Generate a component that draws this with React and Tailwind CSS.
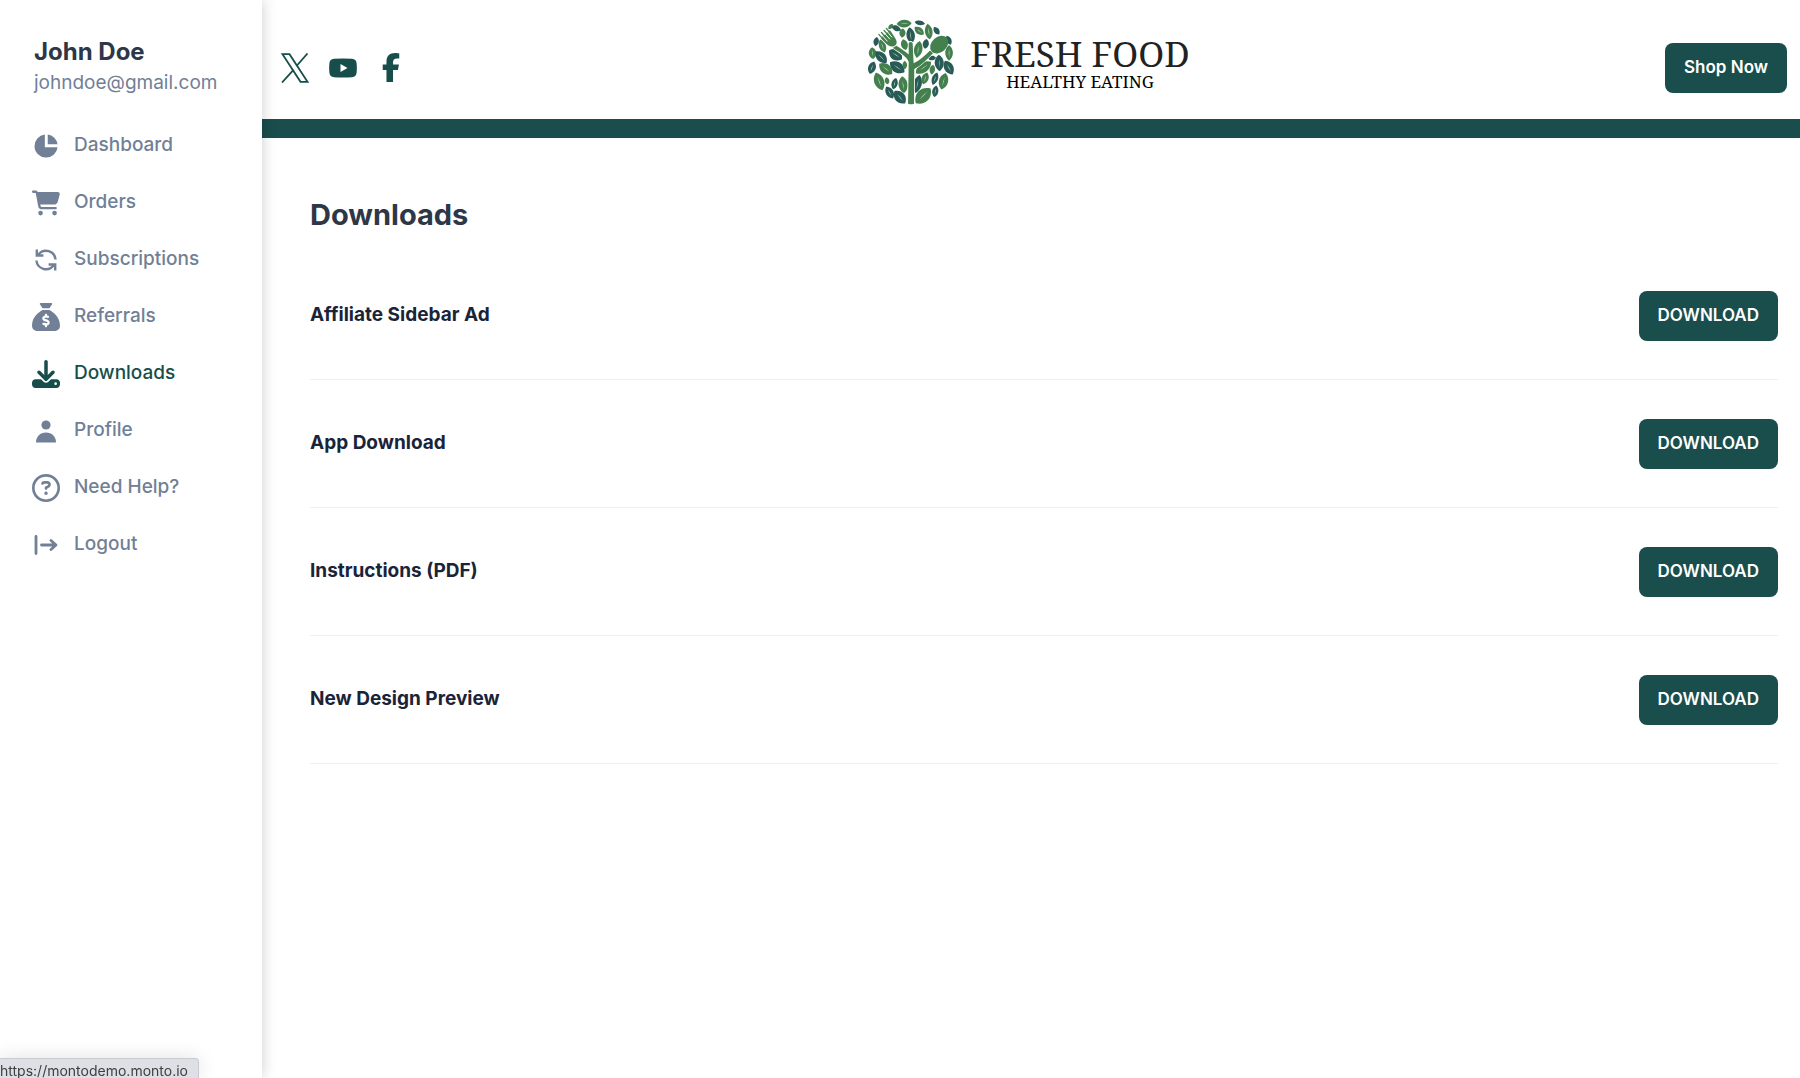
import { FaCartShopping, FaSackDollar, FaDownload, FaRegCircleQuestion, FaFacebookF } from 'react-icons/fa6';

function PieIcon() {
  return (
    <svg viewBox="0 0 24 24" className="size-7" fill="currentColor">
      <path d="M11 2.2V13h10.9A9.9 9.9 0 1 1 11 2.2z" />
      <path d="M13.5 2.2a9.9 9.9 0 0 1 8.4 8.4h-8.4z" />
    </svg>
  );
}

function SyncIcon() {
  return (
    <svg viewBox="0 0 28 28" className="size-7" fill="none" stroke="currentColor" strokeWidth="2.4">
      <path d="M6.500 8.500A9.600 9.600 0 0 1 23.600 13.500" />
      <path d="M4.400 14.500A9.600 9.600 0 0 0 21.500 19.500" />
      <path d="M4.800 3.500v6h6.600M23.200 24.500v-6h-6.600" />
      <path d="M4.500 5.500l4.500 4.500h-4.500zM23.500 22.500l-4.500-4.500h4.500z" fill="currentColor" stroke="none" />
    </svg>
  );
}

function PersonIcon() {
  return (
    <svg viewBox="0 0 28 28" className="size-7" fill="currentColor">
      <circle cx="14" cy="8" r="4.6" />
      <path d="M4 25.500c0-6 4.200-10 10-10s10 4 10 10z" />
    </svg>
  );
}

function LogoutIcon() {
  return (
    <svg viewBox="0 0 28 28" className="size-7" fill="none" stroke="currentColor" strokeWidth="2.8" strokeLinecap="round" strokeLinejoin="round">
      <path d="M4 5.500v17M9.500 14h14M19 9.500l5 4.500-5 4.500" />
    </svg>
  );
}

const NAV_ITEMS = [
  { label: 'Dashboard', Icon: PieIcon },
  { label: 'Orders', Icon: FaCartShopping },
  { label: 'Subscriptions', Icon: SyncIcon },
  { label: 'Referrals', Icon: FaSackDollar },
  { label: 'Downloads', Icon: FaDownload, active: true },
  { label: 'Profile', Icon: PersonIcon },
  { label: 'Need Help?', Icon: FaRegCircleQuestion },
  { label: 'Logout', Icon: LogoutIcon },
];

const DOWNLOADS = ['Affiliate Sidebar Ad', 'App Download', 'Instructions (PDF)', 'New Design Preview'];

// x, y, half length, half width, angle, dark
const LEAVES = [
  [146, 40, 23, 10, -3, 0], [194, 38, 16, 6, 10, 1], [122, 54, 16, 7, 25, 1], [105, 49, 10, 5, -50, 0],
  [141, 69, 14, 8, 95, 0], [166, 76, 25, 11, 82, 1], [192, 62, 18, 9, 40, 0], [221, 64, 24, 10, 82, 0],
  [245, 62, 14, 7, 55, 1], [212, 102, 15, 8, 100, 1], [189, 119, 26, 11, 100, 0], [147, 104, 17, 9, 75, 0],
  [61, 95, 14, 7, 100, 1], [50, 130, 18, 10, 85, 0], [80, 108, 21, 9, 70, 0], [76, 142, 24, 12, 45, 1],
  [120, 135, 24, 14, 35, 1], [48, 174, 20, 10, 110, 1], [90, 178, 25, 13, 38, 0], [125, 173, 27, 14, 35, 1],
  [70, 216, 29, 13, 70, 0], [94, 214, 11, 6, 80, 0], [117, 223, 18, 8, 105, 1], [102, 250, 21, 10, 60, 1],
  [143, 226, 26, 12, 83, 0], [133, 264, 25, 14, 50, 1], [148, 166, 13, 6, 90, 0],
  [205, 174, 29, 13, -37, 0], [187, 224, 28, 11, 103, 1], [210, 207, 19, 9, 110, 0], [204, 260, 32, 17, -45, 0],
  [232, 180, 15, 7, 100, 0], [240, 208, 20, 8, 110, 1], [241, 246, 18, 8, 100, 1], [266, 216, 26, 12, 105, 0],
  [253, 160, 25, 12, 87, 1], [283, 129, 24, 10, 90, 0], [282, 174, 24, 12, 60, 1], [282, 91, 15, 7, 65, 1],
  [231, 145, 12, 6, -5, 1],
];

function Leaf({ leaf }) {
  const [x, y, l, w, angle, dark] = leaf;
  const k = w * 1.55;
  return (
    <g transform={`translate(${x} ${y}) rotate(${angle})`}>
      <path d={`M${-l} 0C${-l / 2} ${-k} ${l / 2} ${-k} ${l} 0C${l / 2} ${k} ${-l / 2} ${k} ${-l} 0z`}
        fill={dark ? '#285b55' : '#43804d'} />
      {l > 17 && <path d={`M${-l * 0.5} 0Q0 -2 ${l * 0.6} 0Q0 2 ${-l * 0.5} 0z`} fill="#cfe0d3" />}
    </g>
  );
}

function TreeLogo() {
  return (
    <svg viewBox="36 26 262 262" className="size-[86px]" aria-hidden="true">
      {LEAVES.map((leaf, i) => <Leaf key={i} leaf={leaf} />)}
      <g fill="#43804d" stroke="#fff" strokeWidth="5" paintOrder="stroke">
        {/* Trunk and branches */}
        <path d="M158 284l2-127c-5-17-27-29-48-43l7-9c17 11 31 19 41 29V99q6-6 12 0l3 62c17-8 33-22 50-39l9 8c-20 20-35 37-57 48l-1 106q-9 4-18 0z" />
        {/* Fork */}
        <path d="M75 83l28-23c9 14 18 25 20 34s-5 17-15 16-22-13-33-27z" />
      </g>
      {/* Spoon */}
      <ellipse cx="253" cy="104" rx="31" ry="23" transform="rotate(-42 253 104)" fill="#43804d" />
      <g stroke="#43804d" strokeWidth="4" strokeLinecap="round">
        <path d="M69 73l16 18M77 67l16 18M85 61l16 18M92 55l16 18" />
      </g>
      <g stroke="#fff" strokeWidth="3">
        <path d="M73 69l22 25M81 63l22 25M89 57l20 25" />
      </g>
    </svg>
  );
}

function Sidebar() {
  return (
    <aside className="relative z-10 w-[262px] shrink-0 bg-white pt-9 shadow-[0_0_14px_rgba(0,0,0,0.2)]">
      <div className="px-[34px]">
        <h2 className="text-2xl leading-8 font-bold text-[#2d3748]">John Doe</h2>
        <p className="text-[19px] leading-[30px] text-[#718096]">johndoe@gmail.com</p>
      </div>
      <nav className="mt-[19px]">
        {NAV_ITEMS.map(({ label, Icon, active }) => (
          <a key={label} href="#"
            className={`flex h-[57px] items-center gap-[14px] px-8 text-[19px] font-medium ${active ? 'text-[#174e4c]' : 'text-[#718096]'}`}>
            <Icon className="size-7 shrink-0" />
            {label}
          </a>
        ))}
      </nav>
    </aside>
  );
}

function Header() {
  return (
    <header className="grid h-[138px] grid-cols-[1fr_auto_1fr] items-center border-b-[19px] border-[#194e4d] px-[13px]">
      <div className="flex items-center gap-5 pt-4 pl-[6px] text-[#174e4c]">
        <a href="#" aria-label="X">
          <svg viewBox="0 0 28 30" className="h-[30px] w-7" fill="none" stroke="currentColor" strokeWidth="1.8">
            <path d="M1.500 1.200h7l18 27.600h-7z" />
            <path d="M26.500.5L15.500 13M12.500 16.800L1 29.500" />
          </svg>
        </a>
        <a href="#" aria-label="YouTube">
          <svg viewBox="0 0 28 28" className="size-7" fill="currentColor">
            <path fillRule="evenodd" d="M5 4.800q9-.8 18 0 4.200.3 4.600 4.400.5 4.800 0 9.600-.4 4.100-4.600 4.400-9 .8-18 0-4.200-.3-4.600-4.400-.5-4.800 0-9.600.4-4.100 4.600-4.400zM11.500 10v8l7-4z" />
          </svg>
        </a>
        <a href="#" aria-label="Facebook">
          <FaFacebookF className="h-[29px] w-7" />
        </a>
      </div>
      <div className="flex items-center gap-4 pt-1 pr-1">
        <TreeLogo />
        <div className="flex flex-col items-center pt-1 font-['Noto_Serif','Liberation_Serif',serif] text-[#222]">
          <span className="text-[35px] leading-9">FRESH FOOD</span>
          <span className="text-[17px] leading-5 text-black">HEALTHY EATING</span>
        </div>
      </div>
      <button className="mt-4 h-[50px] justify-self-end rounded-lg bg-[#194e4d] px-[19px] text-[17px] font-semibold text-white">
        Shop Now
      </button>
    </header>
  );
}

export default function App() {
  return (
    <div className="flex min-h-screen bg-white font-['Inter',sans-serif]">
      <Sidebar />
      <div className="min-w-0 flex-1">
        <Header />
        <main className="pt-[57px] pr-[22px] pl-12">
          <h1 className="text-[29px] leading-10 font-bold text-[#2d3748]">Downloads</h1>
          <ul className="mt-[17px]">
            {DOWNLOADS.map(name => (
              <li key={name} className="flex min-h-32 items-center justify-between border-b border-[#e8f0f0]">
                <h3 className="text-[19px] font-bold text-[#1a2438]">{name}</h3>
                <button className="h-[50px] rounded-lg bg-[#194e4d] px-[19px] text-[17px] font-semibold text-white">
                  DOWNLOAD
                </button>
              </li>
            ))}
          </ul>
        </main>
      </div>

      {/* Link status bubble */}
      <div className="fixed bottom-0 left-0 z-20 h-5 rounded-tr border-t border-r border-[#c8cbd0] bg-[#dee0e5] pr-[10px] text-sm leading-6 text-[#3c4043] shadow-[0_0_20px_rgba(0,0,0,0.12)]">
        https://montodemo.monto.io
      </div>
    </div>
  );
}
